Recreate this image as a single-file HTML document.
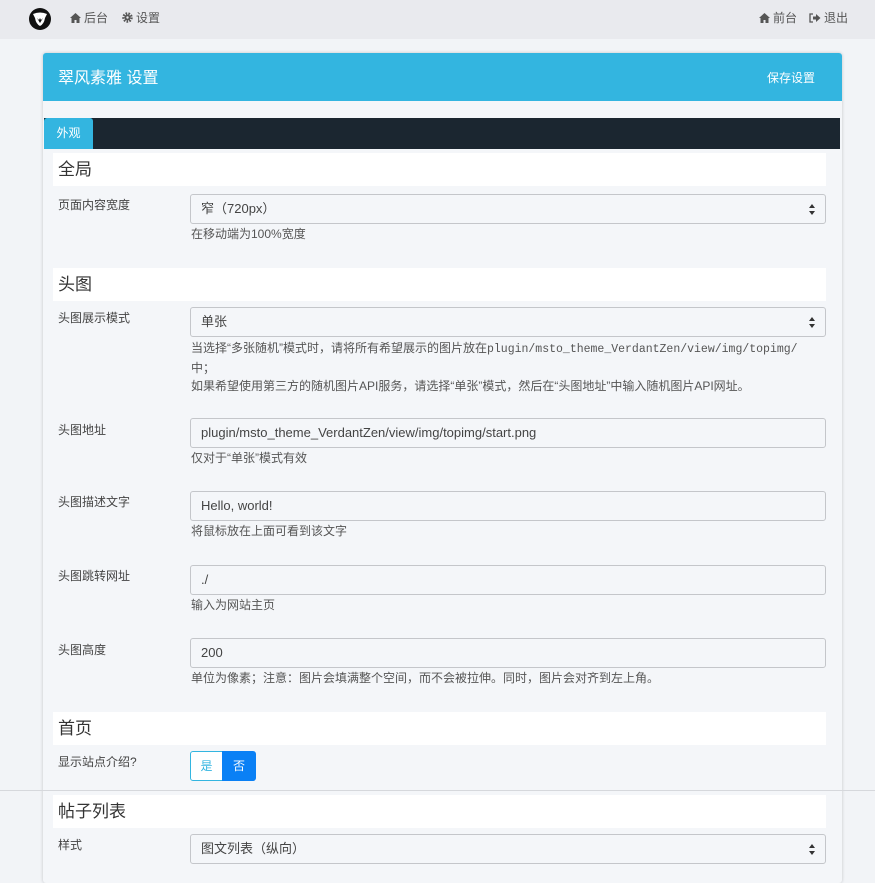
<!DOCTYPE html>
<html><head><meta charset="utf-8"><style>
*{box-sizing:border-box;margin:0;padding:0}
body{width:875px;height:869px;overflow:hidden;background:#f2f4f7;font-family:"Liberation Sans","Noto Sans CJK SC",sans-serif;color:#333;position:relative}
.a{position:absolute}
.nav{left:0;top:0;width:875px;height:39px;background:#e9eaee}
.nt{font-size:12px;color:#555;top:9px}
.card{left:43px;top:53px;width:799px;height:830px;background:#f4f6f9;box-shadow:0 0 3px rgba(0,0,0,.2);border-radius:3px}
.head{left:43px;top:53px;width:799px;height:48px;background:#33b5e0;border-radius:3px 3px 0 0}
.tabs{left:44px;top:118px;width:796px;height:31px;background:#1b2630}
.tab{left:44px;top:118px;width:49px;height:31px;background:#33b5e0;color:#fff;font-size:12px;line-height:31px;text-align:center;border-radius:3px 3px 0 0}
.band{left:53px;width:773px;height:33px;background:#fff;font-size:17px;padding-left:5px;line-height:33px;color:#333}
.lbl{left:58px;font-size:12px;color:#444}
.inp{left:190px;width:636px;height:30px;border:1px solid #c4c6ca;border-radius:3px;background:#f4f6f9;font-size:13px;color:#444;padding-left:10px;line-height:28px}
.sel::after{content:"";position:absolute;right:10px;top:9px;border:3.5px solid transparent;border-bottom:4px solid #333;border-top:0}
.sel::before{content:"";position:absolute;right:10px;top:16px;border:3.5px solid transparent;border-top:4px solid #333;border-bottom:0}
.help{left:191px;font-size:12px;color:#555;line-height:18px}
.mono{font-family:"Liberation Mono",monospace;font-size:11.5px}
.ic{display:inline-block;vertical-align:-1px;margin-right:3px}
</style></head><body>
<div class="a nav"></div>
<svg class="a" style="left:28px;top:7px" width="24" height="24" viewBox="0 0 24 24"><circle cx="12" cy="12" r="11" fill="#111"/><path d="M5 7 Q12 4 19 7 L17 11 Q16 17 12 19 Q8 17 7 11Z" fill="#fff"/><path d="M9 11 L12 16 L15 11 L13 13 L12 11 L11 13Z" fill="#111"/></svg>
<div class="a nt" style="left:70px"><svg class="ic" width="11" height="10" viewBox="0 0 11 10"><path d="M5.5 0 L11 5 L9.5 5 L9.5 10 L6.5 10 L6.5 7 L4.5 7 L4.5 10 L1.5 10 L1.5 5 L0 5Z" fill="#555"/></svg>后台</div>
<div class="a nt" style="left:122px"><svg class="ic" width="11" height="11" viewBox="0 0 11 11"><circle cx="5.5" cy="5.5" r="4" fill="none" stroke="#555" stroke-width="2.5" stroke-dasharray="1.6 1.2"/><circle cx="5.5" cy="5.5" r="3" fill="#555"/><circle cx="5.5" cy="5.5" r="1.2" fill="#e9eaee"/></svg>设置</div>
<div class="a nt" style="left:759px"><svg class="ic" width="11" height="10" viewBox="0 0 11 10"><path d="M5.5 0 L11 5 L9.5 5 L9.5 10 L6.5 10 L6.5 7 L4.5 7 L4.5 10 L1.5 10 L1.5 5 L0 5Z" fill="#555"/></svg>前台</div>
<div class="a nt" style="left:809px"><svg class="ic" width="12" height="10" viewBox="0 0 12 10"><path d="M4 1 H1 V9 H4" fill="none" stroke="#555" stroke-width="1.3"/><path d="M4 3.5 H7 V1 L11.5 5 L7 9 V6.5 H4Z" fill="#555"/></svg>退出</div>
<div class="a card"></div>
<div class="a head"></div>
<div class="a" style="left:58px;top:64px;font-size:16px;color:#fff">翠风素雅 设置</div>
<div class="a" style="left:767px;top:69px;font-size:12px;color:#fff">保存设置</div>
<div class="a tabs"></div>
<div class="a tab">外观</div>

<div class="a band" style="top:153px">全局</div>
<div class="a lbl" style="top:196px">页面内容宽度</div>
<div class="a inp sel" style="top:194px">窄（720px）</div>
<div class="a help" style="top:225px">在移动端为100%宽度</div>

<div class="a band" style="top:268px">头图</div>
<div class="a lbl" style="top:309px">头图展示模式</div>
<div class="a inp sel" style="top:307px">单张</div>
<div class="a help" style="top:339px">当选择“多张随机”模式时，请将所有希望展示的图片放在<span class="mono">plugin/msto_theme_VerdantZen/view/img/topimg/</span><br>中；<br>如果希望使用第三方的随机图片API服务，请选择“单张”模式，然后在“头图地址”中输入随机图片API网址。</div>

<div class="a lbl" style="top:421px">头图地址</div>
<div class="a inp" style="top:418px">plugin/msto_theme_VerdantZen/view/img/topimg/start.png</div>
<div class="a help" style="top:449px">仅对于“单张”模式有效</div>

<div class="a lbl" style="top:493px">头图描述文字</div>
<div class="a inp" style="top:491px">Hello, world!</div>
<div class="a help" style="top:522px">将鼠标放在上面可看到该文字</div>

<div class="a lbl" style="top:567px">头图跳转网址</div>
<div class="a inp" style="top:565px">./</div>
<div class="a help" style="top:596px">输入为网站主页</div>

<div class="a lbl" style="top:641px">头图高度</div>
<div class="a inp" style="top:638px">200</div>
<div class="a help" style="top:669px">单位为像素；注意：图片会填满整个空间，而不会被拉伸。同时，图片会对齐到左上角。</div>

<div class="a band" style="top:712px">首页</div>
<div class="a lbl" style="top:753px">显示站点介绍?</div>
<div class="a" style="left:190px;top:751px;width:33px;height:30px;border:1px solid #33b5e0;border-radius:3px 0 0 3px;color:#33b5e0;font-size:12px;text-align:center;line-height:28px;background:#fff">是</div>
<div class="a" style="left:222px;top:751px;width:34px;height:30px;background:#0a80f5;border-radius:0 3px 3px 0;color:#fff;font-size:12px;text-align:center;line-height:30px">否</div>

<div class="a" style="left:0;top:790px;width:875px;height:1px;background:#d6d8dc"></div>
<div class="a band" style="top:795px">帖子列表</div>
<div class="a lbl" style="top:836px">样式</div>
<div class="a inp sel" style="top:834px">图文列表（纵向）</div>
</body></html>
